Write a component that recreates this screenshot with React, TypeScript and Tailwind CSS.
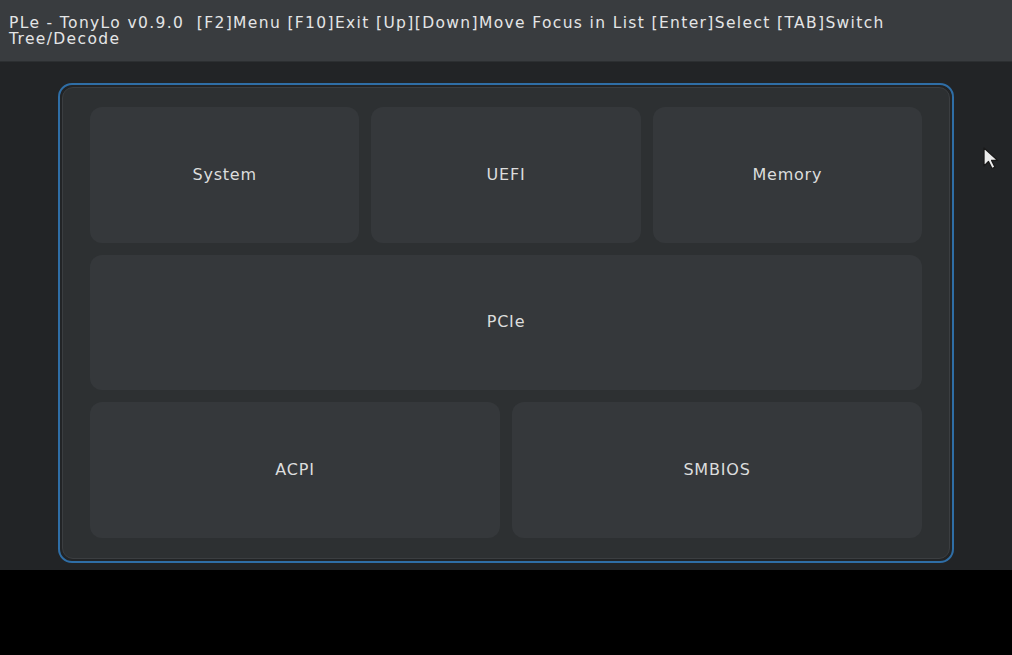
export default function App() {
  const tile =
    'flex items-center justify-center rounded-[12px] bg-[#35383b] text-[16px] tracking-[0.8px] text-[#dcdddd]';

  return (
    <div className="h-[655px] w-[1012px] bg-black font-['DejaVu_Sans',sans-serif]">
      <div className="relative flex h-[570px] flex-col bg-[#222426]">
        <div className="h-[62px] border-b border-[#2c2f31] bg-[#393c3f] px-[9px] pt-[15px] text-[15.5px] leading-[16px] tracking-[1.36px] text-[#e4e5e6]">
          PLe - TonyLo v0.9.0&nbsp; [F2]Menu [F10]Exit [Up][Down]Move Focus in List [Enter]Select [TAB]Switch
          <br />
          Tree/Decode
        </div>

        <div className="flex flex-1 px-[58px] pt-[21px] pb-[7px] pr-[58px]">
          <div className="flex w-[896px] rounded-[14px] border-2 border-[#2f6ea6] p-[2px]">
            <div className="grid flex-1 grid-cols-6 grid-rows-3 gap-[12px] rounded-[11px] border border-[#3b3e41] bg-[#2d3032] px-[27px] pt-[19px] pb-[20px]">
              <div className={`${tile} col-span-2`}>System</div>
              <div className={`${tile} col-span-2`}>UEFI</div>
              <div className={`${tile} col-span-2`}>Memory</div>
              <div className={`${tile} col-span-6`}>PCIe</div>
              <div className={`${tile} col-span-3`}>ACPI</div>
              <div className={`${tile} col-span-3`}>SMBIOS</div>
            </div>
          </div>
        </div>

        <svg
          className="absolute left-[982px] top-[146px]"
          width="20"
          height="24"
          viewBox="0 0 20 24"
        >
          <path
            d="M2 2 L2 20 L6.5 15.5 L10 22.5 L13 21.2 L9.6 14.4 L15.8 14.4 Z"
            fill="#ececec"
            stroke="#1a1a1a"
            strokeWidth="1.3"
            strokeLinejoin="round"
          />
        </svg>
      </div>
    </div>
  );
}
